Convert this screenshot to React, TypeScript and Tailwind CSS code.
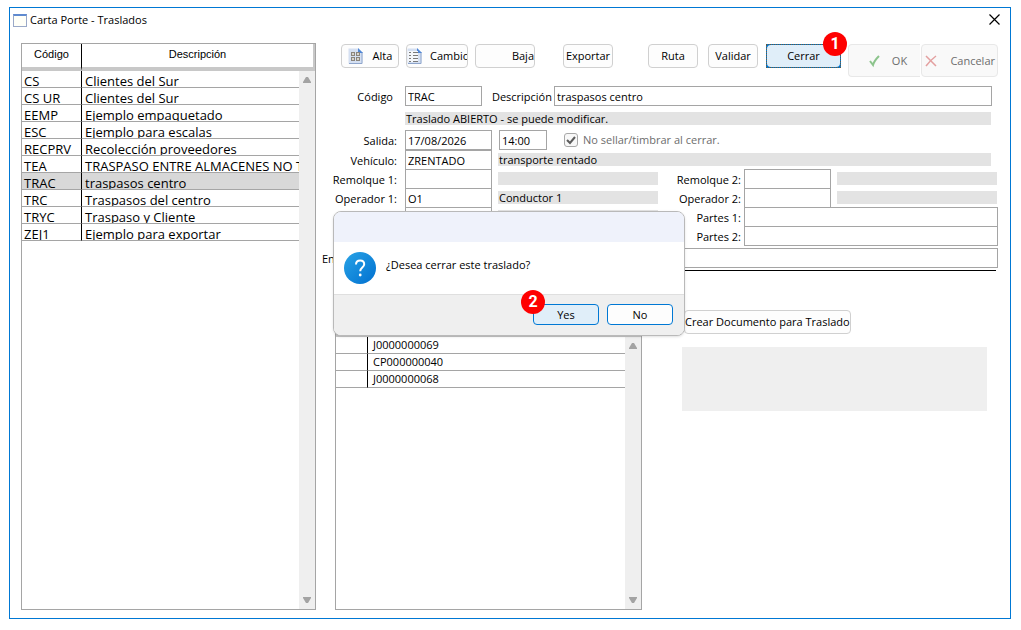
import { useState } from "react";
import type { ReactNode } from "react";

interface Transfer {
  code: string;
  description: string;
}

const transfers: Transfer[] = [
  { code: "CS", description: "Clientes del Sur" },
  { code: "CS UR", description: "Clientes del Sur" },
  { code: "EEMP", description: "Ejemplo empaquetado" },
  { code: "ESC", description: "Ejemplo para escalas" },
  { code: "RECPRV", description: "Recolección proveedores" },
  { code: "TEA", description: "TRASPASO ENTRE ALMACENES NO T" },
  { code: "TRAC", description: "traspasos centro" },
  { code: "TRC", description: "Traspasos del centro" },
  { code: "TRYC", description: "Traspaso y Cliente" },
  { code: "ZEJ1", description: "Ejemplo para exportar" },
];

const documents = ["J0000000069", "CP000000040", "J0000000068"];

const inputClass = "block h-5 w-full min-w-0 border border-[#a5a5a5] bg-white px-[2px] outline-none";
const buttonClass =
  "flex h-6 items-center justify-center overflow-hidden whitespace-nowrap rounded border border-[#d0d0d0] bg-[#fdfdfd]";

function Scrollbar() {
  return (
    <div className="flex w-4 shrink-0 flex-col items-center justify-between bg-[#efefef] py-[6px]">
      <svg width="8" height="6" viewBox="0 0 8 6" fill="#a3a3a3">
        <path d="M3 0h2l3 5v1H0V5z" />
      </svg>
      <svg width="8" height="6" viewBox="0 0 8 6" fill="#a3a3a3">
        <path d="M0 0h8v1L5 6H3L0 1z" />
      </svg>
    </div>
  );
}

function Sheet({ grid }: { grid: boolean }) {
  return (
    <svg className="shrink-0" width="15" height="16" viewBox="0 0 15 16">
      <path d="M.5.5h10l4 4v11H.5z" fill="#d5e0f2" />
      <path d="M14 4v11.500H1" fill="none" stroke="#8fa6cc" />
      <path d="M10 0v5h5z" fill="#4f86d6" />
      {grid ? (
        <g fill="#8a857d">
          <path d="M3 4h4v4H3zM8 4h4v4H8zM3 9h4v4H3zM8 9h4v4H8z" />
          <path d="M4 5h2v2H4zM9 5h2v2H9zM4 10h2v2H4zM9 10h2v2H9z" fill="#d8d4cc" />
        </g>
      ) : (
        <g>
          <path d="M1 3h10v11H1z" fill="#f4f7fb" />
          <path d="M2 4.500h2M2 7.500h2M2 10.500h2M2 13.500h2M6 4.500h5M6 7.500h5M6 10.500h5M6 13.500h5" stroke="#7a7a7a" />
        </g>
      )}
    </svg>
  );
}

function Badge({ children }: { children: ReactNode }) {
  return (
    <span className="flex size-6 items-center justify-center rounded-full bg-[#fe0000] font-['Roboto',sans-serif] text-base font-bold text-white">
      {children}
    </span>
  );
}

function Bar({ children }: { children?: ReactNode }) {
  return <div className="h-[13px] whitespace-nowrap bg-[#e3e3e3] px-px leading-[13px]">{children}</div>;
}

interface FieldProps {
  id: string;
  label: string;
  labelClass: string;
  value?: string;
}

function Field({ id, label, labelClass, value = "" }: FieldProps) {
  const [text, setText] = useState(value);
  return (
    <>
      <label htmlFor={id} className={`whitespace-nowrap pt-[3px] text-right ${labelClass}`}>
        {label}
      </label>
      <input id={id} className={inputClass} value={text} onChange={(e) => setText(e.target.value)} />
    </>
  );
}

function TransferList() {
  const [selected, setSelected] = useState("TRAC");
  return (
    <section className="flex w-[295px] shrink-0 flex-col border border-[#a5a5a5]">
      <table className="w-full table-fixed border-separate border-spacing-0 font-['Liberation_Sans',sans-serif] text-[11px]">
        <thead>
          <tr className="align-top">
            <th className="h-[27px] w-[60px] border-r border-b-4 border-r-black border-b-[#c8c8c8] p-0 font-normal leading-5">
              Código
            </th>
            <th className="h-[27px] border-r-2 border-b-4 border-[#c8c8c8] p-0 font-normal leading-5">Descripción</th>
          </tr>
        </thead>
      </table>
      <div className="flex flex-1">
        <div className="min-w-0 flex-1">
          {/* rows are shorter than the text, descenders get clipped by the rule */}
          <table className="w-full table-fixed border-separate border-spacing-0 text-[13px]">
            <tbody>
              {transfers.map((t) => (
                <tr
                  key={t.code}
                  onClick={() => setSelected(t.code)}
                  className={t.code === selected ? "bg-[#d8d8d8]" : "bg-white"}
                >
                  <td className="w-[60px] border-r border-b border-r-black border-b-[#a5a5a5] p-0">
                    <div className="h-4 overflow-hidden whitespace-nowrap pl-[2px] leading-5">{t.code}</div>
                  </td>
                  <td className="border-b border-[#a5a5a5] p-0">
                    <div className="h-4 overflow-hidden whitespace-nowrap pl-[3px] leading-5">{t.description}</div>
                  </td>
                </tr>
              ))}
            </tbody>
          </table>
        </div>
        <Scrollbar />
      </div>
    </section>
  );
}

function Toolbar() {
  return (
    <div className="flex items-start pl-5">
      <button className={`${buttonClass} w-[58px] gap-[10px]`}>
        <Sheet grid />
        Alta
      </button>
      <button className={`${buttonClass} ml-[7px] w-[62px] justify-start gap-2`}>
        <Sheet grid={false} />
        Cambio
      </button>
      <button className={`${buttonClass} ml-[7px] w-[60px] justify-end`}>Baja</button>
      <button className={`${buttonClass} ml-7 w-[50px]`}>Exportar</button>
      <button className={`${buttonClass} ml-[35px] w-[50px]`}>Ruta</button>
      <button className={`${buttonClass} ml-[10px] w-[50px]`}>Validar</button>
      <div className="relative ml-2">
        <button className="flex h-6 w-[75px] items-stretch bg-[#0078d4]">
          <span className="flex flex-1 border border-dotted border-[#6b5a3c]">
            <span className="flex flex-1 items-center justify-center rounded-sm bg-[#e0eef9]">Cerrar</span>
          </span>
        </button>
        <div className="absolute -top-3 -right-[6px]">
          <Badge>1</Badge>
        </div>
      </div>
      <button
        disabled
        className="ml-[7px] flex h-[33px] w-[72px] items-center justify-center gap-[10px] rounded-l border border-r-0 border-[#e8e8e8] bg-[#f9f9f9] pl-[6px] text-[#6d6d6d]"
      >
        <svg width="14" height="14" viewBox="0 0 14 14" fill="none" stroke="#8cc48c" strokeWidth="2">
          <path d="M2 7l3 4c1-4 3-6 6-9" />
        </svg>
        OK
      </button>
      <button
        disabled
        className="ml-px flex h-[33px] flex-1 items-center justify-between rounded border border-[#e8e8e8] bg-[#f9f9f9] px-[2px] text-[#6d6d6d]"
      >
        <svg width="14" height="14" viewBox="0 0 14 14" fill="none" stroke="#e3a0a0" strokeWidth="1.5">
          <path d="M2 2l10 10M12 2C8 5 5 8 2 12" />
        </svg>
        Cancelar
      </button>
    </div>
  );
}

function TransferForm() {
  const [code, setCode] = useState("TRAC");
  const [description, setDescription] = useState("traspasos centro");
  const [date, setDate] = useState("17/08/2026");
  const [time, setTime] = useState("14:00");
  const [skipStamp, setSkipStamp] = useState(true);

  return (
    <form className="mt-[9px]">
      <div className="flex items-center">
        <label htmlFor="code" className="w-[84px] pt-[2px] pr-3 text-right">
          Código
        </label>
        <div className="w-[77px]">
          <input id="code" className={inputClass} value={code} onChange={(e) => setCode(e.target.value)} />
        </div>
        <label htmlFor="description" className="w-[72px] whitespace-nowrap pt-[2px] pr-[2px] text-right">
          Descripción
        </label>
        <div className="mr-[6px] flex-1">
          <input
            id="description"
            className={inputClass}
            value={description}
            onChange={(e) => setDescription(e.target.value)}
          />
        </div>
      </div>

      <div className="mt-[6px] mr-[7px] ml-[84px]">
        <Bar>Traslado ABIERTO - se puede modificar.</Bar>
      </div>

      <div className="mt-[5px] flex items-center">
        <label htmlFor="date" className="w-[84px] pt-[2px] pr-2 text-right">
          Salida:
        </label>
        <div className="w-[87px]">
          <input id="date" className={inputClass} value={date} onChange={(e) => setDate(e.target.value)} />
        </div>
        <div className="ml-[7px] w-12">
          <input
            aria-label="Hora"
            className={inputClass}
            value={time}
            onChange={(e) => setTime(e.target.value)}
          />
        </div>
        <label className="ml-[17px] flex items-center gap-[5px] text-[#6d6d6d]">
          <span className="relative flex size-[14px]">
            <input
              type="checkbox"
              className="size-[14px] appearance-none rounded-[3px] border border-[#a8a8a8] bg-[#f8f8f8]"
              checked={skipStamp}
              onChange={(e) => setSkipStamp(e.target.checked)}
            />
            {skipStamp && (
              <svg
                className="pointer-events-none absolute inset-0"
                width="14"
                height="14"
                viewBox="0 0 14 14"
                fill="none"
                stroke="#5c5c5c"
                strokeWidth="2"
              >
                <path d="M3 7l3 3 5-6" />
              </svg>
            )}
          </span>
          No sellar/timbrar al cerrar.
        </label>
      </div>

      <div className="grid auto-rows-[19px] grid-cols-[84px_87px_1fr_85px_87px_1fr]">
        <Field id="vehicle" label="Vehículo:" labelClass="pr-2" value="ZRENTADO" />
        <div className="col-span-4 mr-[7px] pt-[3px] pl-[6px]">
          <Bar>transporte rentado</Bar>
        </div>

        <Field id="trailer1" label="Remolque 1:" labelClass="pr-2" />
        <div className="pt-[3px] pr-px pl-[6px]">
          <Bar />
        </div>
        <Field id="trailer2" label="Remolque 2:" labelClass="pr-[3px]" />
        <div className="pt-[3px] pr-px pl-[6px]">
          <Bar />
        </div>

        <Field id="driver1" label="Operador 1:" labelClass="pr-2" value="O1" />
        <div className="pt-[3px] pr-px pl-[6px]">
          <Bar>Conductor 1</Bar>
        </div>
        <Field id="driver2" label="Operador 2:" labelClass="pr-[3px]" />
        <div className="pt-[3px] pr-px pl-[6px]">
          <Bar />
        </div>

        <div />
        <input aria-label="Partes" className={inputClass} />
        <div className="pt-[3px] pr-px pl-[6px]">
          <Bar />
        </div>
        <label htmlFor="parts1" className="pt-[3px] pr-[3px] text-right">
          Partes 1:
        </label>
        <input id="parts1" className={`${inputClass} col-span-2`} />

        <label htmlFor="parts2" className="col-start-4 pt-[3px] pr-[3px] text-right">
          Partes 2:
        </label>
        <input id="parts2" className={`${inputClass} col-span-2`} />
      </div>

      <div className="mt-[3px] flex items-center">
        <label htmlFor="notes" className="w-[84px] pl-px pt-[2px]">
          En
        </label>
        <input id="notes" className={`${inputClass} flex-1`} />
      </div>
      <hr className="mt-[2px] mr-[2px] ml-[14px] border-black" />
    </form>
  );
}

function DocumentList() {
  return (
    <section className="ml-[14px] flex w-[307px] shrink-0 flex-col border border-[#a5a5a5]">
      <div className="h-[26px] shrink-0 border-b-4 border-[#c8c8c8]" />
      <div className="flex flex-1">
        <div className="flex-1">
          <table className="w-full table-fixed border-separate border-spacing-0">
            <tbody>
              {documents.map((doc) => (
                <tr key={doc}>
                  <td className="w-8 border-r border-b border-r-black border-b-[#a5a5a5] p-0" />
                  <td className="h-[17px] border-b border-[#a5a5a5] py-0 pr-0 pl-[5px] leading-4">{doc}</td>
                </tr>
              ))}
            </tbody>
          </table>
        </div>
        <Scrollbar />
      </div>
    </section>
  );
}

function ConfirmDialog() {
  return (
    <div
      role="dialog"
      aria-labelledby="question"
      className="absolute top-[211px] left-[333px] w-[352px] overflow-hidden rounded-lg border border-[#b9b9b9] bg-white shadow-sm"
    >
      <div className="h-[30px] bg-[#eff2fb]" />
      <div className="flex h-[52px] gap-[10px] px-[10px] pt-[10px]">
        <svg width="32" height="32" viewBox="0 0 32 32">
          <defs>
            <linearGradient id="help" x1="0" y1="0" x2="1" y2="1">
              <stop offset="0" stopColor="#29a3e6" />
              <stop offset="1" stopColor="#0070d0" />
            </linearGradient>
          </defs>
          <circle cx="16" cy="16" r="16" fill="url(#help)" />
          <path
            d="M12 12.500c0-2.500 1.700-4 4.200-4s4 1.500 4 3.700c0 3.300-4 3.300-4 7"
            fill="none"
            stroke="#fff"
            strokeWidth="2"
          />
          <circle cx="16.200" cy="23" r="1.400" fill="#fff" />
        </svg>
        <p id="question" className="pt-[5px]">
          ¿Desea cerrar este traslado?
        </p>
      </div>
      <div className="flex h-[41px] justify-end gap-2 border-t border-[#dfdfdf] bg-[#efefef] pt-[9px] pr-[11px]">
        <div className="relative">
          <button className="h-[21px] w-[66px] rounded border border-[#0078d4] bg-[#e0eef9]">Yes</button>
          <div className="absolute -top-[14px] -left-3">
            <Badge>2</Badge>
          </div>
        </div>
        <button className="h-[21px] w-[66px] rounded border border-[#0078d4] bg-[#fdfdfd]">No</button>
      </div>
    </div>
  );
}

export default function App() {
  return (
    <div className="relative flex min-h-screen flex-col bg-white pt-[7px] pr-[10px] pb-[11px] pl-[9px] font-['Open_Sans',sans-serif] text-[11px] leading-4 text-black">
      <main className="flex flex-1 flex-col border border-[#0078d4]">
        <header className="flex h-[35px] items-start justify-between pt-1 pr-[10px] pl-[3px]">
          <h1 className="flex items-center gap-[3px]">
            <span className="h-[13px] w-[14px] border border-t-2 border-[#9aa9c8] border-t-[#5f8ad0] bg-[#fffff8]" />
            Carta Porte - Traslados
          </h1>
          <button aria-label="Cerrar ventana" className="pt-[2px]">
            <svg width="11" height="11" viewBox="0 0 11 11" stroke="#000" strokeWidth="1.200">
              <path d="M.5.5l10 10M10.500.5l-10 10" />
            </svg>
          </button>
        </header>

        <div className="flex flex-1 pr-3 pb-2 pl-[11px]">
          <TransferList />
          <div className="ml-[5px] flex min-w-0 flex-1 flex-col pt-px">
            <Toolbar />
            <TransferForm />
            <div className="mt-[39px] flex flex-1">
              <DocumentList />
              <div className="ml-10 min-w-0 flex-1 pr-[11px]">
                <button className={`${buttonClass} ml-[2px]`}>Crear Documento para Traslado</button>
                <div className="mt-[13px] h-16 bg-[#efefef]" />
              </div>
            </div>
          </div>
        </div>
      </main>
      <ConfirmDialog />
    </div>
  );
}
